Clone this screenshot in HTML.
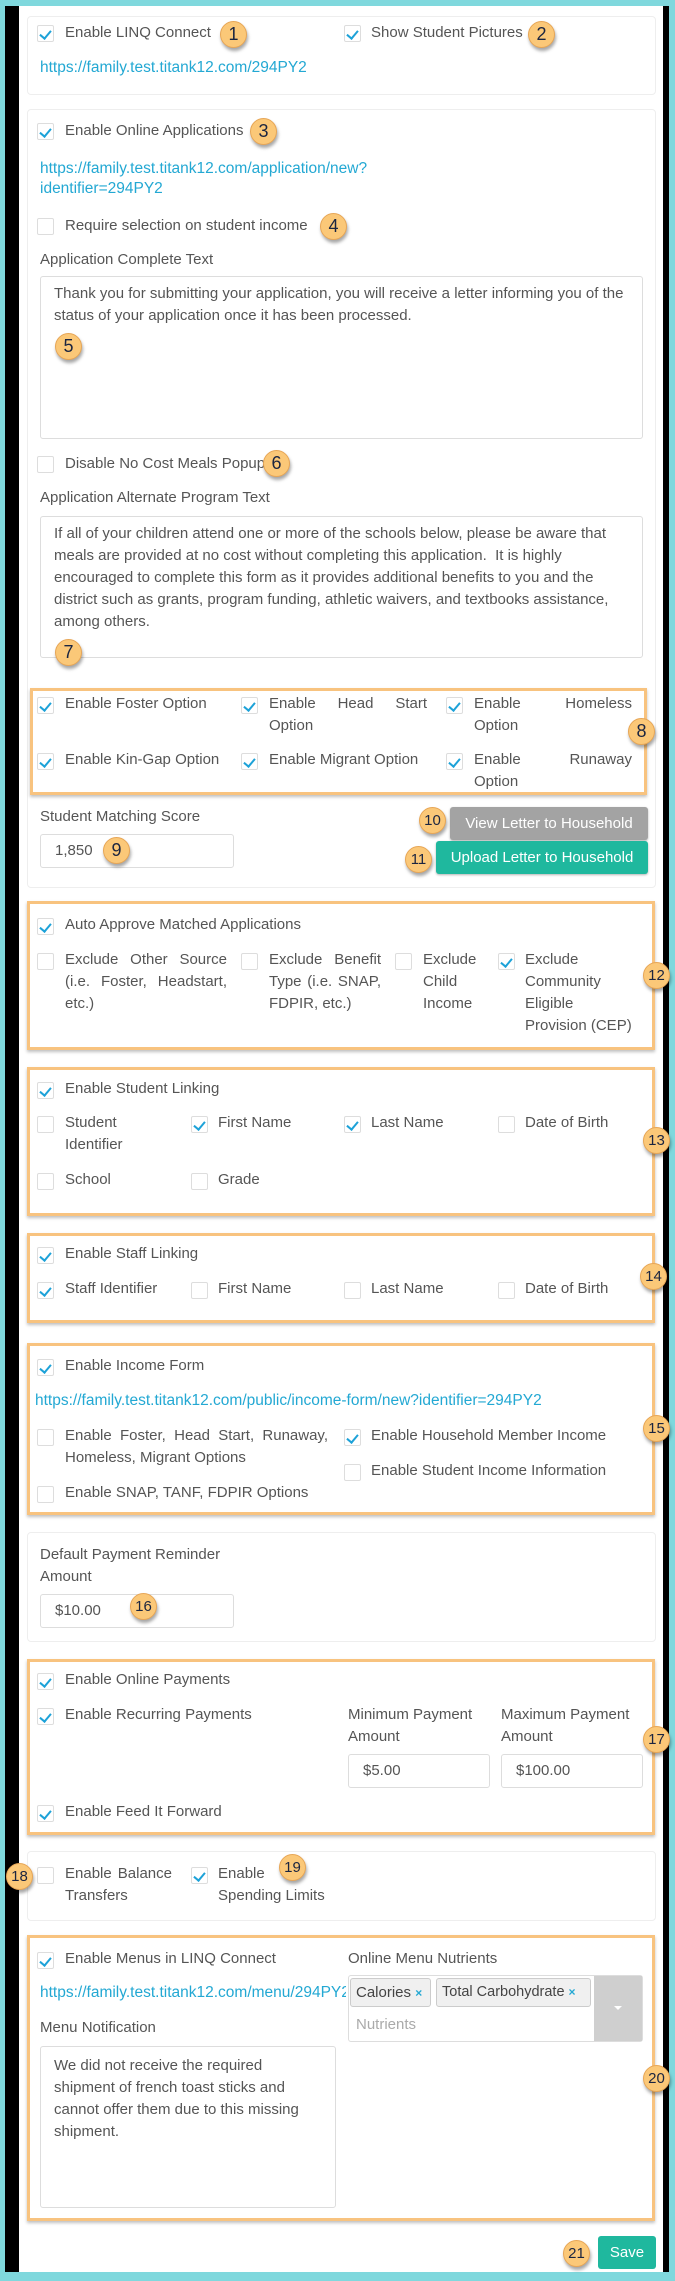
<!DOCTYPE html>
<html><head><meta charset="utf-8">
<style>
*{box-sizing:border-box;margin:0;padding:0}
body{width:675px;height:2281px;background:#7fd8dd;position:relative;overflow:hidden;font-family:"Liberation Sans",sans-serif;font-size:15px;color:#555}
.frame{position:absolute;left:5px;top:6px;width:664px;height:2266px;background:#000}
.page{position:absolute;left:19px;top:6px;width:644px;height:2266px;background:#fff}
.a{position:absolute}
.t{position:absolute;line-height:22px;white-space:nowrap}
.j{position:absolute;line-height:22px;text-align:justify;text-align-last:left}
.jl{text-align-last:justify}
.cb{position:absolute;width:17px;height:17px;border:1px solid #ddd;border-radius:2px;background:#fff}
.cb.on::after{content:"";position:absolute;left:4px;top:2px;width:5px;height:9px;border:solid #1da2d8;border-width:0 2.5px 2.5px 0;transform:rotate(40deg)}
.panel{position:absolute;border:1px solid #eee;border-radius:4px;background:#fff}
.ob{position:absolute;border:3px solid #f8c37f;box-shadow:0 2px 3px rgba(0,0,0,.25)}
.lnk{position:absolute;color:#23a8d3;line-height:20px;white-space:nowrap;font-size:15.5px}
.in{position:absolute;border:1px solid #ddd;border-radius:3px;background:#fff;padding-left:14px;line-height:32px;color:#555}
.ta{position:absolute;border:1px solid #ddd;border-radius:3px;background:#fff;padding:6px 13px;line-height:22px;color:#555}
.bd{position:absolute;width:27px;height:27px;margin:-13px 0 0 -13px;border-radius:50%;background:#fbc878;border:1px solid #e7a656;box-shadow:1px 3px 3px rgba(0,0,0,.35);color:#1b2540;font-size:18px;line-height:25px;text-align:center;font-family:"Liberation Sans",sans-serif}
.bd.s{font-size:15px}
.lb{position:absolute;line-height:22px;white-space:nowrap}
</style></head><body>
<div class="frame"></div>
<div class="page"></div>

<div class="panel" style="left:27px;top:16px;width:629px;height:79px"></div>
<div class="cb on" style="left:37px;top:25px"></div><div class="t" style="left:65px;top:22px">Enable LINQ Connect</div>
<div class="cb on" style="left:344px;top:25px"></div><div class="t" style="left:371px;top:22px">Show Student Pictures</div>
<div class="lnk" style="left:40px;top:58px">https://family.test.titank12.com/294PY2</div>

<div class="panel" style="left:27px;top:109px;width:629px;height:779px"></div>
<div class="cb on" style="left:37px;top:123px"></div><div class="t" style="left:65px;top:120px">Enable Online Applications</div>
<div class="lnk" style="left:40px;top:159px">https://family.test.titank12.com/application/new?</div>
<div class="lnk" style="left:40px;top:179px">identifier=294PY2</div>
<div class="cb" style="left:37px;top:218px"></div><div class="t" style="left:65px;top:215px">Require selection on student income</div>
<div class="lb" style="left:40px;top:249px">Application Complete Text</div>
<div class="ta" style="left:40px;top:276px;width:603px;height:163px">Thank you for submitting your application, you will receive a letter informing you of the status of your application once it has been processed.</div>
<div class="cb" style="left:37px;top:456px"></div><div class="t" style="left:65px;top:453px">Disable No Cost Meals Popup</div>
<div class="lb" style="left:40px;top:487px">Application Alternate Program Text</div>
<div class="ta" style="left:40px;top:516px;width:603px;height:142px">If all of your children attend one or more of the schools below, please be aware that meals are provided at no cost without completing this application.&nbsp; It is highly encouraged to complete this form as it provides additional benefits to you and the district such as grants, program funding, athletic waivers, and textbooks assistance, among others.</div>

<div class="ob" style="left:30px;top:688px;width:617px;height:107px"></div>
<div class="cb on" style="left:37px;top:697px"></div><div class="t" style="left:65px;top:693px">Enable Foster Option</div>
<div class="cb on" style="left:241px;top:697px"></div><div class="j jl" style="left:269px;top:693px;width:158px">Enable Head Start</div><div class="t" style="left:269px;top:715px">Option</div>
<div class="cb on" style="left:446px;top:697px"></div><div class="j jl" style="left:474px;top:693px;width:158px">Enable Homeless</div><div class="t" style="left:474px;top:715px">Option</div>
<div class="cb on" style="left:37px;top:753px"></div><div class="t" style="left:65px;top:749px">Enable Kin-Gap Option</div>
<div class="cb on" style="left:241px;top:753px"></div><div class="t" style="left:269px;top:749px">Enable Migrant Option</div>
<div class="cb on" style="left:446px;top:753px"></div><div class="j jl" style="left:474px;top:749px;width:158px">Enable Runaway</div><div class="t" style="left:474px;top:771px">Option</div>

<div class="lb" style="left:40px;top:806px">Student Matching Score</div>
<div class="in" style="left:40px;top:834px;width:194px;height:34px">1,850</div>
<div class="a" style="left:450px;top:807px;width:198px;height:33px;background:#a3a3a3;border-radius:3px;color:#fff;text-align:center;line-height:33px;box-shadow:0 1px 2px rgba(0,0,0,.3)">View Letter to Household</div>
<div class="a" style="left:436px;top:841px;width:212px;height:33px;background:#1fb89e;border-radius:3px;color:#fff;text-align:center;line-height:33px;box-shadow:0 1px 2px rgba(0,0,0,.3)">Upload Letter to Household</div>

<div class="ob" style="left:27px;top:901px;width:628px;height:149px"></div>
<div class="cb on" style="left:37px;top:918px"></div><div class="t" style="left:65px;top:914px">Auto Approve Matched Applications</div>
<div class="cb" style="left:37px;top:953px"></div><div class="j" style="left:65px;top:949px;width:162px">Exclude Other Source (i.e. Foster, Headstart, etc.)</div>
<div class="cb" style="left:241px;top:953px"></div><div class="j" style="left:269px;top:949px;width:112px">Exclude Benefit Type (i.e. SNAP, FDPIR, etc.)</div>
<div class="cb" style="left:395px;top:953px"></div><div class="j" style="left:423px;top:949px;width:62px">Exclude Child Income</div>
<div class="cb on" style="left:498px;top:953px"></div><div class="t" style="left:525px;top:949px">Exclude</div><div class="t" style="left:525px;top:971px">Community</div><div class="t" style="left:525px;top:993px">Eligible</div><div class="t" style="left:525px;top:1015px">Provision (CEP)</div>

<div class="ob" style="left:27px;top:1067px;width:628px;height:149px"></div>
<div class="cb on" style="left:37px;top:1082px"></div><div class="t" style="left:65px;top:1078px">Enable Student Linking</div>
<div class="cb" style="left:37px;top:1116px"></div><div class="t" style="left:65px;top:1112px">Student</div><div class="t" style="left:65px;top:1134px">Identifier</div>
<div class="cb on" style="left:191px;top:1116px"></div><div class="t" style="left:218px;top:1112px">First Name</div>
<div class="cb on" style="left:344px;top:1116px"></div><div class="t" style="left:371px;top:1112px">Last Name</div>
<div class="cb" style="left:498px;top:1116px"></div><div class="t" style="left:525px;top:1112px">Date of Birth</div>
<div class="cb" style="left:37px;top:1173px"></div><div class="t" style="left:65px;top:1169px">School</div>
<div class="cb" style="left:191px;top:1173px"></div><div class="t" style="left:218px;top:1169px">Grade</div>

<div class="ob" style="left:27px;top:1233px;width:628px;height:90px"></div>
<div class="cb on" style="left:37px;top:1247px"></div><div class="t" style="left:65px;top:1243px">Enable Staff Linking</div>
<div class="cb on" style="left:37px;top:1282px"></div><div class="t" style="left:65px;top:1278px">Staff Identifier</div>
<div class="cb" style="left:191px;top:1282px"></div><div class="t" style="left:218px;top:1278px">First Name</div>
<div class="cb" style="left:344px;top:1282px"></div><div class="t" style="left:371px;top:1278px">Last Name</div>
<div class="cb" style="left:498px;top:1282px"></div><div class="t" style="left:525px;top:1278px">Date of Birth</div>

<div class="ob" style="left:27px;top:1343px;width:628px;height:172px"></div>
<div class="cb on" style="left:37px;top:1359px"></div><div class="t" style="left:65px;top:1355px">Enable Income Form</div>
<div class="lnk" style="left:35px;top:1391px">https://family.test.titank12.com/public/income-form/new?identifier=294PY2</div>
<div class="cb" style="left:37px;top:1429px"></div><div class="j" style="left:65px;top:1425px;width:263px">Enable Foster, Head Start, Runaway, Homeless, Migrant Options</div>
<div class="cb" style="left:37px;top:1486px"></div><div class="t" style="left:65px;top:1482px">Enable SNAP, TANF, FDPIR Options</div>
<div class="cb on" style="left:344px;top:1429px"></div><div class="t" style="left:371px;top:1425px">Enable Household Member Income</div>
<div class="cb" style="left:344px;top:1464px"></div><div class="t" style="left:371px;top:1460px">Enable Student Income Information</div>

<div class="panel" style="left:27px;top:1532px;width:629px;height:110px"></div>
<div class="lb" style="left:40px;top:1544px">Default Payment Reminder</div>
<div class="lb" style="left:40px;top:1566px">Amount</div>
<div class="in" style="left:40px;top:1594px;width:194px;height:34px">$10.00</div>

<div class="ob" style="left:27px;top:1659px;width:628px;height:176px"></div>
<div class="cb on" style="left:37px;top:1673px"></div><div class="t" style="left:65px;top:1669px">Enable Online Payments</div>
<div class="cb on" style="left:37px;top:1708px"></div><div class="t" style="left:65px;top:1704px">Enable Recurring Payments</div>
<div class="lb" style="left:348px;top:1704px">Minimum Payment</div><div class="lb" style="left:348px;top:1726px">Amount</div>
<div class="lb" style="left:501px;top:1704px">Maximum Payment</div><div class="lb" style="left:501px;top:1726px">Amount</div>
<div class="in" style="left:348px;top:1754px;width:142px;height:34px">$5.00</div>
<div class="in" style="left:501px;top:1754px;width:142px;height:34px">$100.00</div>
<div class="cb on" style="left:37px;top:1805px"></div><div class="t" style="left:65px;top:1801px">Enable Feed It Forward</div>

<div class="panel" style="left:27px;top:1851px;width:629px;height:70px"></div>
<div class="cb" style="left:37px;top:1867px"></div><div class="j jl" style="left:65px;top:1863px;width:107px">Enable Balance</div><div class="t" style="left:65px;top:1885px">Transfers</div>
<div class="cb on" style="left:191px;top:1867px"></div><div class="t" style="left:218px;top:1863px">Enable</div><div class="t" style="left:218px;top:1885px">Spending Limits</div>

<div class="ob" style="left:27px;top:1935px;width:628px;height:286px"></div>
<div class="cb on" style="left:37px;top:1952px"></div><div class="t" style="left:65px;top:1948px">Enable Menus in LINQ Connect</div>
<div class="lnk" style="left:40px;top:1983px;width:306px;overflow:hidden">https://family.test.titank12.com/menu/294PY2</div>
<div class="lb" style="left:40px;top:2017px">Menu Notification</div>
<div class="ta" style="left:40px;top:2046px;width:296px;height:162px;padding-top:8px">We did not receive the required shipment of french toast sticks and cannot offer them due to this missing shipment.</div>
<div class="lb" style="left:348px;top:1948px">Online Menu Nutrients</div>
<div class="a" style="left:348px;top:1975px;width:295px;height:67px;border:1px solid #ddd;border-radius:3px;background:#fff"></div>
<div class="a" style="left:594px;top:1976px;width:48px;height:65px;background:#cfcfcf"></div>
<div class="a" style="left:614px;top:2006px;width:0;height:0;border-left:4px solid transparent;border-right:4px solid transparent;border-top:4px solid #fff"></div>
<div class="a" style="left:350px;top:1978px;width:81px;height:29px;border:1px solid #ccc;border-radius:3px;background:#f0f0f0;line-height:27px;padding-left:5px;color:#444;white-space:nowrap">Calories <span style="color:#23a8d3;font-size:12px;font-weight:bold">×</span></div>
<div class="a" style="left:436px;top:1978px;width:155px;height:29px;border:1px solid #ccc;border-radius:3px;background:#f0f0f0;line-height:27px;padding-left:5px;color:#444;white-space:nowrap;font-size:14.5px">Total Carbohydrate <span style="color:#23a8d3;font-size:12px;font-weight:bold">×</span></div>
<div class="t" style="left:356px;top:2014px;color:#aaa">Nutrients</div>

<div class="a" style="left:598px;top:2236px;width:58px;height:33px;background:#1fb89e;border-radius:3px;color:#fff;text-align:center;line-height:33px">Save</div>

<div class="bd" style="left:233px;top:34px">1</div>
<div class="bd" style="left:541px;top:34px">2</div>
<div class="bd" style="left:263px;top:131px">3</div>
<div class="bd" style="left:333px;top:226px">4</div>
<div class="bd" style="left:68px;top:346px">5</div>
<div class="bd" style="left:276px;top:463px">6</div>
<div class="bd" style="left:68px;top:652px">7</div>
<div class="bd" style="left:641px;top:731px">8</div>
<div class="bd" style="left:116px;top:850px">9</div>
<div class="bd s" style="left:432px;top:820px">10</div>
<div class="bd s" style="left:418px;top:859px">11</div>
<div class="bd s" style="left:656px;top:975px">12</div>
<div class="bd s" style="left:656px;top:1140px">13</div>
<div class="bd s" style="left:653px;top:1276px">14</div>
<div class="bd s" style="left:656px;top:1428px">15</div>
<div class="bd s" style="left:143px;top:1606px">16</div>
<div class="bd s" style="left:656px;top:1739px">17</div>
<div class="bd s" style="left:19px;top:1876px">18</div>
<div class="bd s" style="left:292px;top:1867px">19</div>
<div class="bd s" style="left:656px;top:2078px">20</div>
<div class="bd s" style="left:576px;top:2253px">21</div>
</body></html>
